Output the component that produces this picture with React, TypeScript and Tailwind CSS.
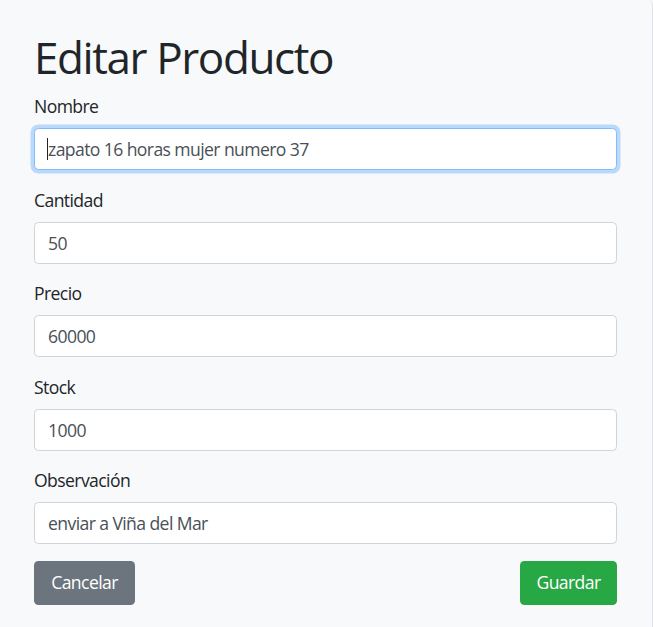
import { useState } from "react";

const fields = [
  { label: "Nombre", value: "zapato 16 horas mujer numero 37", focused: true },
  { label: "Cantidad", value: "50" },
  { label: "Precio", value: "60000" },
  { label: "Stock", value: "1000" },
  { label: "Observación", value: "enviar a Viña del Mar" },
];

export default function App() {
  const [values, setValues] = useState(fields.map((f) => f.value));

  return (
    <div
      className="min-h-screen w-full bg-[#f8f9fa] text-[#212529] tracking-[-0.6px]"
      style={{ fontFamily: '"Open Sans", "Noto Sans", sans-serif' }}
    >
      <div className="min-h-screen w-full border-r border-[#dee2e6] rounded-tr-[5px] pl-[34px] pr-[35px] pt-[31px]">
        <h1 className="text-[44px] leading-[53px] font-normal mb-[9px] tracking-[-1.4px]">Editar Producto</h1>
        <form className="flex flex-col">
          {fields.map((f, i) => (
            <div key={f.label} className="mb-[16.5px]">
              <label className="block text-[17.6px] leading-[26.4px] mb-[8.8px]">{f.label}</label>
              <div className="relative">
                <input
                  className={`w-full h-[41.8px] rounded-[4.4px] bg-white px-[13px] text-[17.6px] text-[#495057] outline-none border ${
                    f.focused
                      ? "border-[#80bdff] shadow-[0_0_0_3.5px_rgba(0,123,255,0.25)]"
                      : "border-[#ced4da]"
                  }`}
                  value={values[i]}
                  onChange={(e) => {
                    const next = [...values];
                    next[i] = e.target.value;
                    setValues(next);
                  }}
                />
                {f.focused && (
                  <span className="absolute left-[13px] top-[10px] h-[22px] w-px bg-[#212529]" />
                )}
              </div>
            </div>
          ))}
          <div className="flex justify-between">
            <button
              type="button"
              className="w-[101px] h-[44px] rounded-[4.4px] bg-[#6c757d] text-white text-[17.6px]"
            >
              Cancelar
            </button>
            <button
              type="submit"
              className="w-[97px] h-[44px] rounded-[4.4px] bg-[#28a745] text-white text-[17.6px]"
            >
              Guardar
            </button>
          </div>
        </form>
      </div>
    </div>
  );
}
